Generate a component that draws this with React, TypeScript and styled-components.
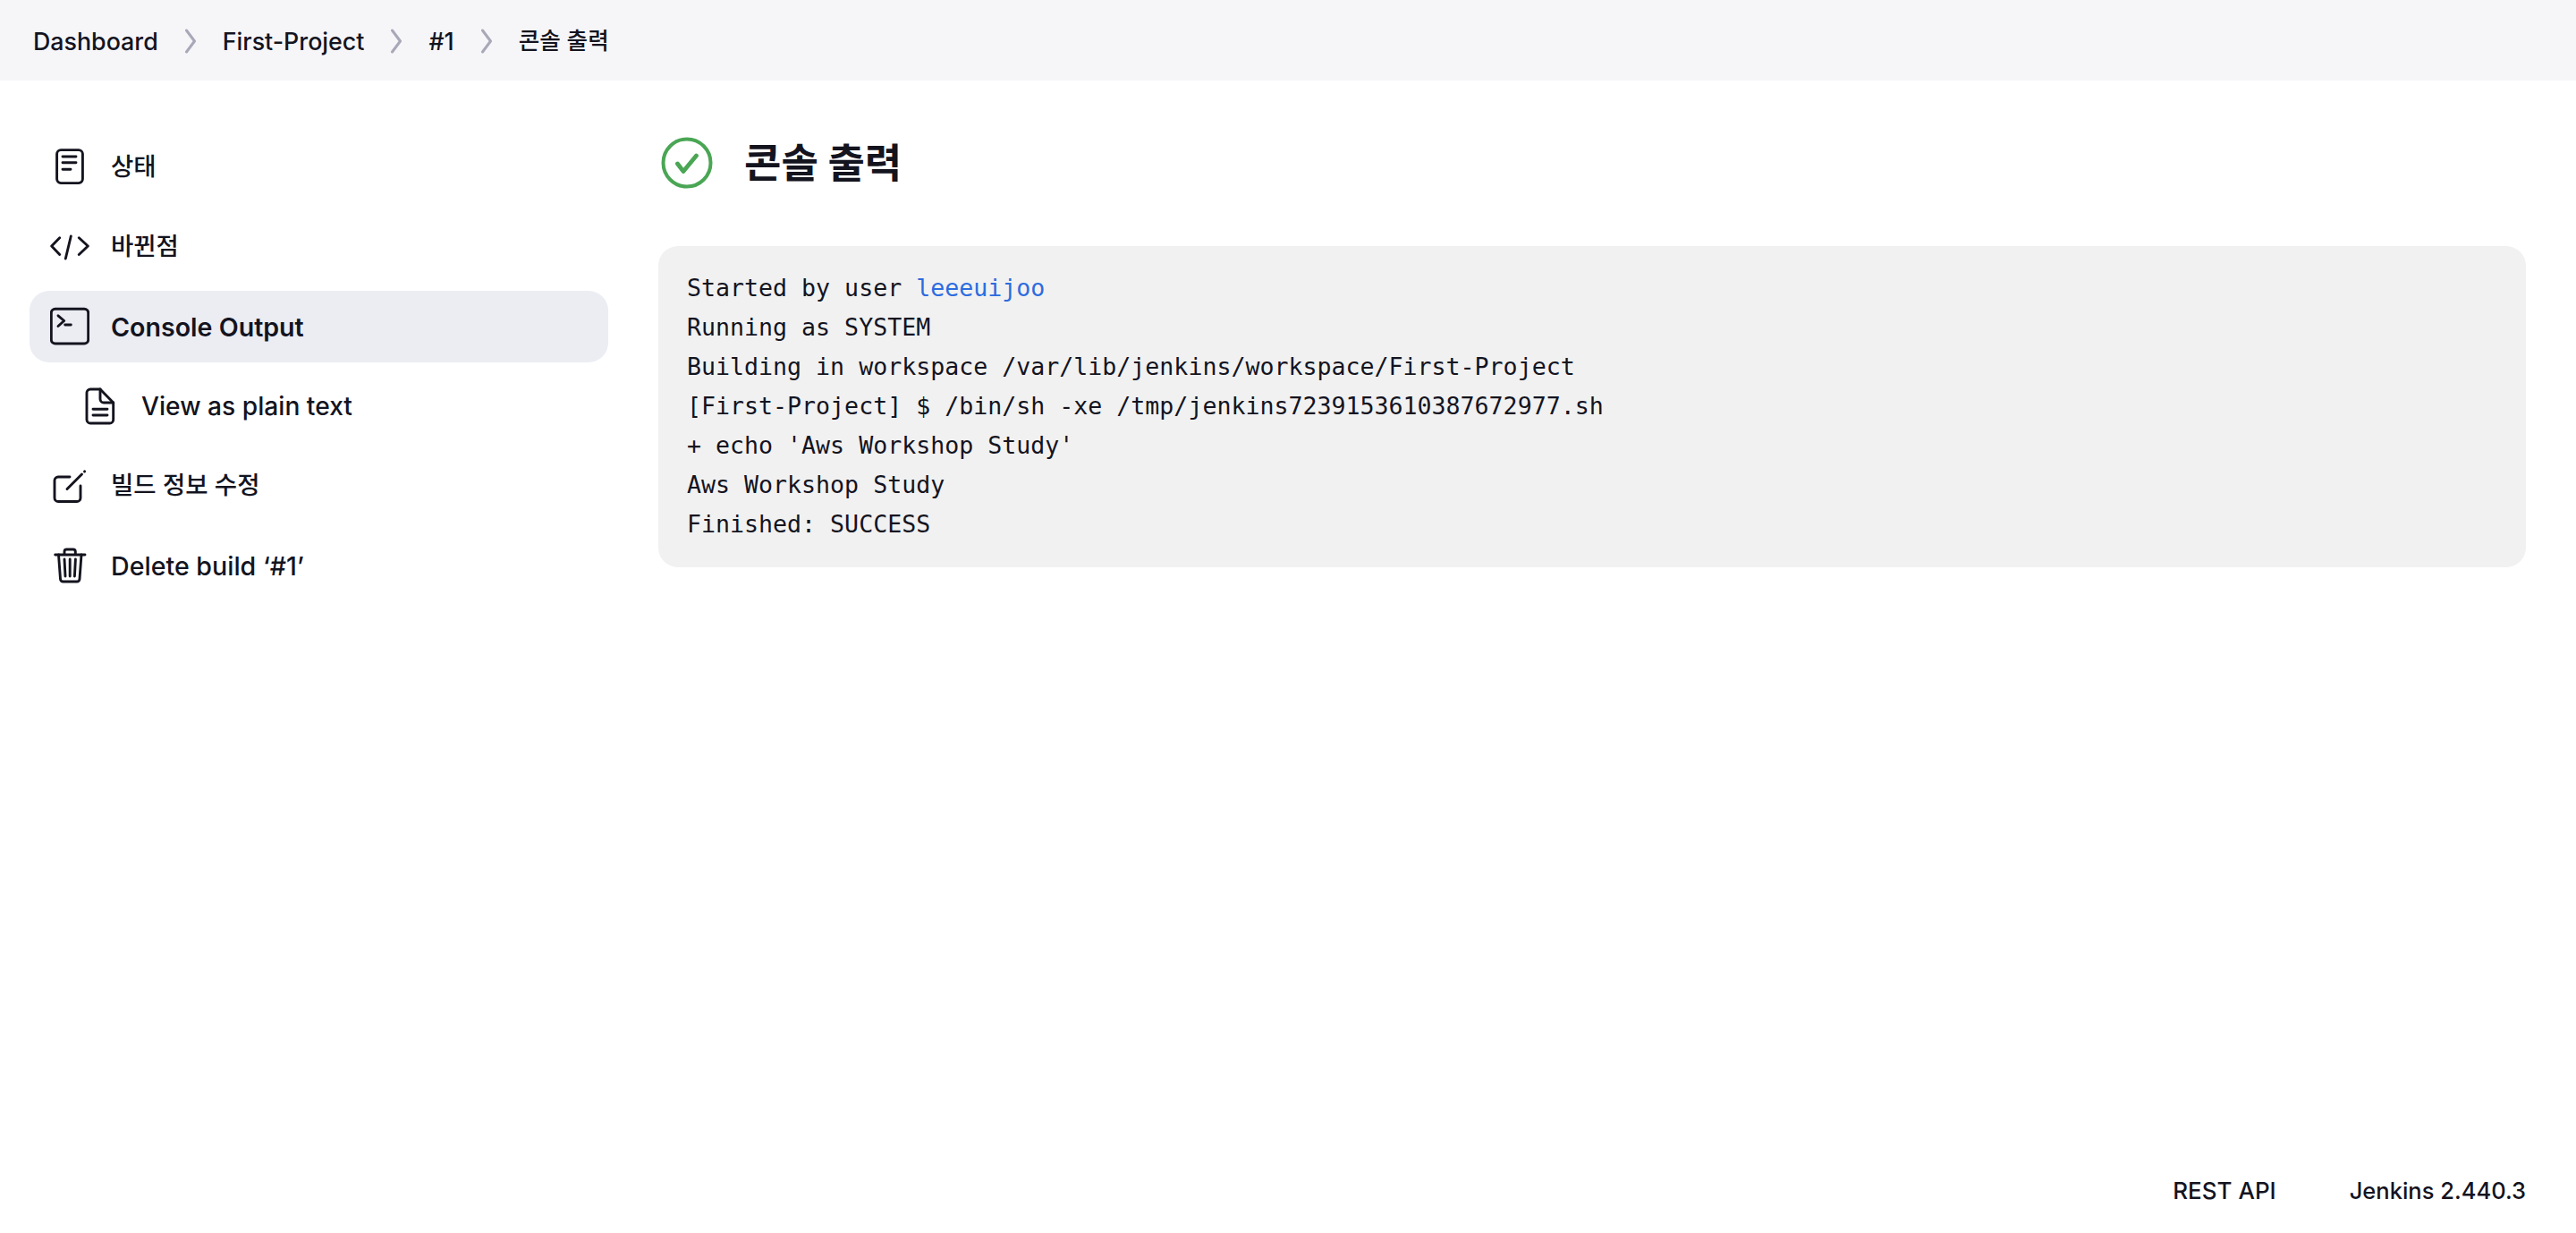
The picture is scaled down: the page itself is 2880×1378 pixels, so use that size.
import React from 'react';
import styled, { createGlobalStyle } from 'styled-components';

// #region styled
const GlobalStyle = createGlobalStyle`
  html, body {
    margin: 0;
    padding: 0;
    background: #fff;
  }
  body {
    color: #14141f;
    font-family: Inter, "Noto Sans CJK KR", sans-serif;
  }
`;

const Page = styled.div`
  display: flex;
  flex-direction: column;
  height: 1378px;
  overflow: hidden;
`;

const Breadcrumbs = styled.nav`
  align-items: center;
  background: #f6f6f9;
  box-sizing: border-box;
  display: flex;
  font-weight: 500;
  gap: 30px;
  height: 90px;
  padding: 2px 0 0 37px;
`;

const Crumb = styled.span<{ $ko?: boolean }>`
  font-size: ${(p) => (p.$ko ? '25.6px' : '26.8px')};
  line-height: 1;
`;

const Body = styled.div`
  display: flex;
  flex: 1;
  gap: 56px;
  padding: 0 56px 0 33px;
`;

const Sidebar = styled.aside`
  display: flex;
  flex-direction: column;
  flex: none;
  gap: 9px;
  padding-top: 57px;
  width: 647px;
`;

const Task = styled.a<{ $active?: boolean; $nested?: boolean }>`
  align-items: center;
  background: ${(p) => (p.$active ? '#ebedf3' : 'transparent')};
  border-radius: 22px;
  box-sizing: border-box;
  display: flex;
  font-weight: ${(p) => (p.$active ? 600 : 500)};
  gap: 24px;
  height: 80px;
  padding-left: ${(p) => (p.$nested ? '57px' : '23px')};
`;

const TaskLabel = styled.span<{ $ko?: boolean; $size?: number }>`
  font-size: ${(p) => (p.$ko ? 27.5 : p.$size ?? 28.6)}px;
  padding-bottom: ${(p) => (p.$ko ? '6px' : '0')};
`;

const TaskIcon = styled.svg`
  fill: none;
  flex: none;
  height: 44px;
  stroke: currentColor;
  stroke-linecap: round;
  stroke-linejoin: round;
  stroke-width: 2.9;
  width: 44px;
`;

const Main = styled.main`
  flex: 1;
  min-width: 0;
  padding-top: 55px;
`;

const TitleRow = styled.div`
  align-items: center;
  display: flex;
  gap: 34px;
  height: 74px;
  margin-bottom: 56px;
  padding-left: 2px;
`;

const StatusIcon = styled.svg`
  flex: none;
  height: 60px;
  width: 60px;
`;

const Title = styled.h1`
  font-size: 45px;
  font-weight: 700;
  line-height: 1;
  margin: 0;
`;

const Console = styled.pre`
  background: #f1f1f1;
  border-radius: 22px;
  font-family: "DejaVu Sans Mono", "Liberation Mono", monospace;
  font-size: 26.6px;
  line-height: 44px;
  margin: 0;
  padding: 25px 32px 26px;
`;

const UserLink = styled.a`
  color: #2b6cdf;
`;

const Footer = styled.footer`
  align-items: center;
  display: flex;
  font-weight: 500;
  gap: 82px;
  justify-content: flex-end;
  padding: 0 56px 32px 0;
`;

const FooterLink = styled.span<{ $size: number }>`
  font-size: ${(p) => p.$size}px;
`;
// #endregion

const Chevron: React.FC = () => (
  <svg width="12" height="28" viewBox="0 0 12 28" fill="none" stroke="#a8a8b8" strokeWidth="3" strokeLinecap="round" strokeLinejoin="round">
    <path d="M1.5 2 L10.5 14 L1.5 26" />
  </svg>
);

const App: React.FC = () => {
  return (
    <Page>
      <GlobalStyle />
      <Breadcrumbs>
        <Crumb>Dashboard</Crumb>
        <Chevron />
        <Crumb>First-Project</Crumb>
        <Chevron />
        <Crumb>#1</Crumb>
        <Chevron />
        <Crumb $ko>콘솔 출력</Crumb>
      </Breadcrumbs>
      <Body>
        <Sidebar>
          <Task>
            <TaskIcon viewBox="0 0 44 44">
              <rect x="7.6" y="2.6" width="28.8" height="37" rx="4.5" />
              <path d="M14 10 H29 M14 16.7 H29 M14 24.3 H23" />
            </TaskIcon>
            <TaskLabel $ko>상태</TaskLabel>
          </Task>
          <Task>
            <TaskIcon viewBox="0 0 44 44">
              <path d="M10.7 11.7 L1.7 21 L10.7 30.5 M32.3 11.7 L42.3 21 L32.3 30.5 M23.3 10 L17.3 35" />
            </TaskIcon>
            <TaskLabel $ko>바뀐점</TaskLabel>
          </Task>
          <Task $active>
            <TaskIcon viewBox="0 0 44 44">
              <rect x="1.3" y="2.2" width="41.4" height="38.8" rx="4.5" />
              <path d="M9 9.8 L15.7 15.5 L9 21.5 M16.7 20 H23.3" />
            </TaskIcon>
            <TaskLabel>Console Output</TaskLabel>
          </Task>
          <Task $nested>
            <TaskIcon viewBox="0 0 44 44">
              <path d="M11 3 H22 L36.7 18 V37 a4 4 0 0 1 -4 4 H11 a4 4 0 0 1 -4 -4 V7 a4 4 0 0 1 4 -4 Z" />
              <path d="M22 3 V14 a4 4 0 0 0 4 4 H36.7 M14 25.3 H30 M14 32 H30" />
            </TaskIcon>
            <TaskLabel $size={28.2}>View as plain text</TaskLabel>
          </Task>
          <Task>
            <TaskIcon viewBox="0 0 44 44">
              <path d="M22 12 H9 a4 4 0 0 0 -4 4 V35.5 a4 4 0 0 0 4 4 H30 a4 4 0 0 0 4 -4 V22" />
              <path d="M19 25.5 L35.5 9 M38.5 6 L38.6 5.9" />
            </TaskIcon>
            <TaskLabel $ko>빌드 정보 수정</TaskLabel>
          </Task>
          <Task>
            <TaskIcon viewBox="0 0 44 44">
              <path d="M5.7 10 H39 M16 10 V6.5 a2.5 2.5 0 0 1 2.5 -2.5 H25.8 a2.5 2.5 0 0 1 2.5 2.5 V10" />
              <path d="M9.5 10 L11.5 37 a3 3 0 0 0 3 3 H30 a3 3 0 0 0 3 -3 L35 10" />
              <path d="M16 15 L17 34 M22.2 15 V34 M28.4 15 L27.4 34" />
            </TaskIcon>
            <TaskLabel>Delete build ‘#1’</TaskLabel>
          </Task>
        </Sidebar>
        <Main>
          <TitleRow>
            <StatusIcon viewBox="0 0 60 60">
              <circle cx="30" cy="30" r="26.5" fill="none" stroke="#4aa654" strokeWidth="4" />
              <path d="M19.5 31 L26 39.5 L40.5 22" fill="none" stroke="#4aa654" strokeWidth="4.8" strokeLinecap="round" strokeLinejoin="round" />
            </StatusIcon>
            <Title>콘솔 출력</Title>
          </TitleRow>
          <Console>
            Started by user <UserLink>leeeuijoo</UserLink>
            {'\n'}Running as SYSTEM
            {'\n'}Building in workspace /var/lib/jenkins/workspace/First-Project
            {'\n'}[First-Project] $ /bin/sh -xe /tmp/jenkins7239153610387672977.sh
            {'\n'}+ echo &apos;Aws Workshop Study&apos;
            {'\n'}Aws Workshop Study
            {'\n'}Finished: SUCCESS
          </Console>
        </Main>
      </Body>
      <Footer>
        <FooterLink $size={26}>REST API</FooterLink>
        <FooterLink $size={25.5}>Jenkins 2.440.3</FooterLink>
      </Footer>
    </Page>
  );
};

export default App;
